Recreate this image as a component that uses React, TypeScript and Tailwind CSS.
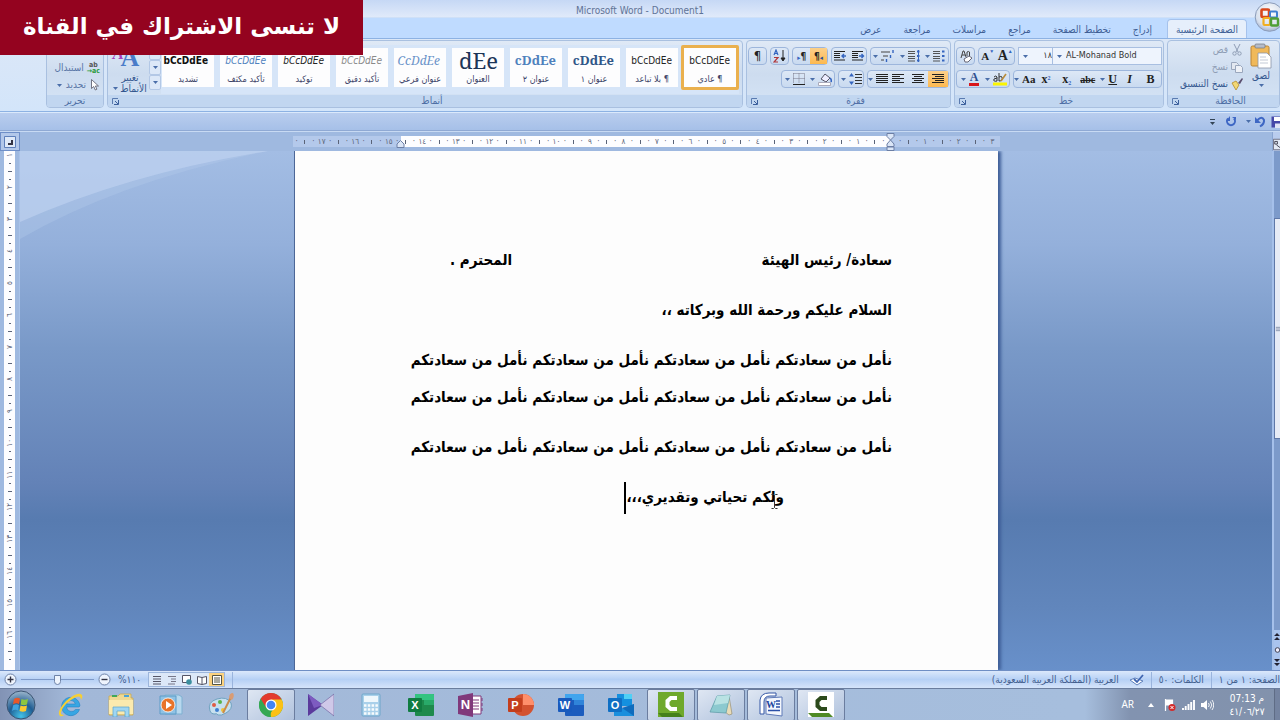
import type { ReactNode } from "react";
import clsx from "clsx";

const tabs = ["إدراج", "تخطيط الصفحة", "مراجع", "مراسلات", "مراجعة", "عرض"];

const styleCards = [
  { label: "¶ عادي", sample: "bCcDdEe", look: "text-[10px] text-[#222]" },
  { label: "¶ بلا تباعد", sample: "bCcDdEe", look: "text-[10px] text-[#222]" },
  { label: "عنوان ١", sample: "cDdEe", look: "font-['Noto_Serif','DejaVu_Serif',serif] text-[13px] font-bold text-[#2f5688]" },
  { label: "عنوان ٢", sample: "cDdEe", look: "font-['Noto_Serif','DejaVu_Serif',serif] text-[13px] font-bold text-[#4f81bd]" },
  { label: "العنوان", sample: "dEe", look: "font-['Noto_Serif','DejaVu_Serif',serif] text-[22px] leading-[25px] text-[#1c3558]" },
  { label: "عنوان فرعي", sample: "CcDdEe", look: "font-['Noto_Serif','DejaVu_Serif',serif] text-[12px] italic text-[#6b93c9]" },
  { label: "تأكيد دقيق", sample: "bCcDdEe", look: "text-[10px] italic text-[#8a8a8a]" },
  { label: "توكيد", sample: "bCcDdEe", look: "text-[10px] italic text-[#222]" },
  { label: "تأكيد مكثف", sample: "bCcDdEe", look: "text-[10px] italic text-[#4f81bd]" },
  { label: "تشديد", sample: "bCcDdEe", look: "text-[10px] font-bold text-[#111]" },
];

const rulerMarks = ["٣", "٢", "١", "", "١", "٢", "٣", "٤", "٥", "٦", "٧", "٨", "٩", "١٠", "١١", "١٢", "١٣", "١٤", "١٥", "١٦", "١٧"];
const sideMarks = ["١", "٢", "٣", "٤", "٥", "٦", "٧", "٨", "٩", "١٠", "١١", "١٢", "١٣", "١٤", "١٥", "١٦"];

const bodyLine = "نأمل من سعادتكم نأمل من سعادتكم نأمل من سعادتكم نأمل من سعادتكم";

const Caret = () => (
  <svg viewBox="0 0 5 3" className="h-[3px] w-[5px] shrink-0" aria-hidden="true">
    <path d="M0 0h5L2.500 3z" fill="#4a6ea9" />
  </svg>
);

const Launcher = () => (
  <button aria-label="خيارات" className="flex w-[14px] items-center justify-center">
    <svg viewBox="0 0 7 7" className="h-[7px] w-[7px]">
      <path d="M.5 6V.5H6" fill="none" stroke="#5a7bb0" />
      <path d="M6.500 2v4.500H2M3 3l3 3" fill="none" stroke="#3b5f9c" />
    </svg>
  </button>
);

function Group({ title, launcher, className, children }: { title: string; launcher?: boolean; className?: string; children: ReactNode }) {
  return (
    <section className={clsx("flex h-[68px] flex-col overflow-hidden rounded-sm border border-[#a9c0e0] bg-linear-to-b from-[#dfe9f6] via-[#cddcef] to-[#d5e4f6]", className)}>
      <div className="h-[54px]">{children}</div>
      <div className="flex h-3 bg-[#c1d6f0]">
        <h2 className="flex-1 text-center text-[10px] leading-3 text-[#4f6fa5]">{title}</h2>
        {launcher && <Launcher />}
      </div>
    </section>
  );
}

const Box = ({ className, children }: { className?: string; children: ReactNode }) => (
  <div className={clsx("flex h-[18px] items-stretch rounded-sm border border-[#9db6dc] bg-linear-to-b from-[#dde8f6] to-[#c9daf0]", className)}>
    {children}
  </div>
);

function Btn({ label, on, caret, children }: { label: string; on?: boolean; caret?: boolean; children: ReactNode }) {
  return (
    <button
      aria-label={label}
      title={label}
      className={clsx("flex flex-1 items-center justify-center gap-[3px] text-[#222]", on && "bg-linear-to-b from-[#fbd08a] to-[#fdb94e]")}
    >
      {children}
      {caret && <Caret />}
    </button>
  );
}

function Lines({ widths, align }: { widths: number[]; align: "right" | "left" | "center" }) {
  return (
    <svg viewBox="0 0 12 10" className="h-[10px] w-3">
      {widths.map((w, i) => (
        <rect key={i} x={align === "right" ? 12 - w : align === "left" ? 0 : (12 - w) / 2} y={i * 2} width={w} height="1" fill="#222" />
      ))}
    </svg>
  );
}

const ListIcon = ({ mark }: { mark: string }) => (
  <svg viewBox="0 0 12 12" className="h-3 w-3">
    <path d="M0 1.500h7M0 3.500h7M0 6.500h7M0 8.500h7M0 11h7" stroke="#444" strokeWidth=".9" />
    <path d="M9 1.500h2.500M9 6h2.500M9 10.500h2.500" stroke="#3565c0" strokeWidth="2" />
    {mark === "number" && <path d="M10.500 0v12" stroke="#3565c0" />}
  </svg>
);

const IndentIcon = ({ flip }: { flip?: boolean }) => (
  <svg viewBox="0 0 14 12" className="h-3 w-[14px]">
    <path d="M1 1.500h11M1 3.500h6M1 5.500h6M1 7.500h6M1 10h11" stroke="#222" strokeWidth="1.200" />
    <path d={flip ? "M9 6h4M11 4L9 6l2 2" : "M8 6h4M10.500 4l2 2-2 2"} stroke="#3565c0" strokeWidth="1.400" fill="none" />
  </svg>
);

function FontGroup() {
  return (
    <Group title="خط" launcher className="w-[210px] shrink-0">
      <div className="flex flex-col gap-[5px] px-px pt-[6px]">
        <div className="flex gap-[3px]">
          <div className="flex">
            <label className="flex h-[18px] w-[110px] items-center border border-[#a8bfe1] bg-[#eef4fd] pe-1">
              <select aria-label="نوع الخط" dir="ltr" className="w-full appearance-none bg-transparent ps-1 text-[9px] text-[#333] outline-none">
                <option>AL-Mohanad Bold</option>
              </select>
              <Caret />
            </label>
            <label className="flex h-[18px] w-[34px] items-center border border-r-0 border-[#a8bfe1] bg-[#eef4fd] pe-1">
              <select aria-label="حجم الخط" className="w-full appearance-none bg-transparent text-[9px] text-[#333] outline-none">
                <option>١٨</option>
              </select>
              <Caret />
            </label>
          </div>
          <Box className="w-[37px] font-['Liberation_Serif',serif] font-bold">
            <Btn label="تكبير الخط"><span dir="ltr" className="flex"><span className="text-[14px] leading-4">A</span><span className="text-[5px] text-[#3565c0]">▲</span></span></Btn>
            <Btn label="تصغير الخط"><span dir="ltr" className="flex"><span className="text-[11px] leading-4">A</span><span className="text-[5px] text-[#3565c0]">▼</span></span></Btn>
          </Box>
          <Box className="w-[19px]">
            <Btn label="مسح التنسيق">
              <svg viewBox="0 0 14 14" className="h-[14px] w-[14px]">
                <path d="M2 9L4 2h1l2 6M3 6h3M8 7V3q2-1 2.500 0v4" fill="none" stroke="#444" />
                <path d="M5 10l5-3 3 2-4 4H6z" fill="#fff" stroke="#667" />
              </svg>
            </Btn>
          </Box>
        </div>
        <div className="flex gap-[3px]">
          <Box className="w-[149px] font-['Liberation_Serif',serif] text-[12px] font-bold">
            <Btn label="غامق">B</Btn>
            <Btn label="مائل"><i>I</i></Btn>
            <Btn label="تسطير" caret><u>U</u></Btn>
            <Btn label="يتوسطه خط"><s className="text-[10px]">abc</s></Btn>
            <Btn label="منخفض"><span dir="ltr">x<sub className="text-[6px] text-[#3565c0]">2</sub></span></Btn>
            <Btn label="مرتفع"><span dir="ltr">x<sup className="text-[6px] text-[#3565c0]">2</sup></span></Btn>
            <Btn label="تغيير حالة الأحرف" caret><span className="text-[11px]">Aa</span></Btn>
          </Box>
          <Box className="w-[54px] font-['Liberation_Serif',serif] font-bold">
            <Btn label="لون التمييز" caret>
              <svg viewBox="0 0 14 14" className="h-[14px] w-[14px]">
                <path d="M0 10.500h14v3H0z" fill="#fbf500" />
                <path d="M1 5q2-2 3 0v4q-4 1-3-2l3-1M6 1v8q4 0 3-4-1-1-3 0" fill="none" stroke="#333" />
                <path d="M8 9l5-7" stroke="#b98c3a" strokeWidth="1.600" />
              </svg>
            </Btn>
            <Btn label="لون الخط" caret>
              <span className="border-b-[3px] border-[#d8151b] px-px text-[12px] leading-[11px] text-[#2e4f8f]">A</span>
            </Btn>
          </Box>
        </div>
      </div>
    </Group>
  );
}

function ParagraphGroup() {
  return (
    <Group title="فقرة" launcher className="w-[205px] shrink-0">
      <div className="flex flex-col gap-[5px] px-px pt-[6px]">
        <div className="flex gap-[3px]">
          <Box className="w-[80px]">
            <Btn label="تعداد نقطي" caret><ListIcon mark="bullet" /></Btn>
            <Btn label="تعداد رقمي" caret><ListIcon mark="number" /></Btn>
            <Btn label="قائمة متعددة المستويات" caret>
              <svg viewBox="0 0 14 12" className="h-3 w-[14px]">
                <path d="M0 2h9M2 6h5M0 10h3" stroke="#444" strokeWidth="1.200" />
                <path d="M12 0v3M9.500 5v3M5.500 9v3" stroke="#3565c0" strokeWidth="1.400" />
              </svg>
            </Btn>
          </Box>
          <Box className="w-[37px]">
            <Btn label="إنقاص المسافة البادئة"><IndentIcon /></Btn>
            <Btn label="زيادة المسافة البادئة"><IndentIcon flip /></Btn>
          </Box>
          <Box className="w-9">
            <Btn label="من اليمين إلى اليسار" on><span dir="ltr" className="text-[10px] font-bold">¶<span className="text-[7px] text-[#2c4f95]">◂</span></span></Btn>
            <Btn label="من اليسار إلى اليمين"><span dir="ltr" className="text-[10px] font-bold"><span className="text-[7px] text-[#3565c0]">▸</span>¶</span></Btn>
          </Box>
          <Box className="w-5">
            <Btn label="فرز">
              <svg viewBox="0 0 13 14" className="h-[14px] w-[13px]">
                <path d="M1 6l2-5 2 5M2 4.500h2" fill="none" stroke="#3565c0" strokeWidth="1.200" />
                <path d="M1 8.500h4l-4 4.500h4" fill="none" stroke="#b0363a" strokeWidth="1.200" />
                <path d="M10 1v10M8 9l2 3 2-3z" fill="#222" stroke="#222" />
              </svg>
            </Btn>
          </Box>
          <Box className="w-[19px]">
            <Btn label="إظهار الكل"><span className="text-[13px] leading-4">¶</span></Btn>
          </Box>
        </div>
        <div className="flex gap-[3px]">
          <Box className="w-[82px]">
            <Btn label="محاذاة إلى اليمين" on><Lines align="right" widths={[12, 9, 12, 9, 12]} /></Btn>
            <Btn label="توسيط"><Lines align="center" widths={[12, 8, 12, 8, 12]} /></Btn>
            <Btn label="محاذاة إلى اليسار"><Lines align="left" widths={[12, 8, 12, 8, 12]} /></Btn>
            <Btn label="ضبط" caret><Lines align="left" widths={[12, 12, 12, 12, 12]} /></Btn>
          </Box>
          <Box className="w-[26px]">
            <Btn label="تباعد الأسطر" caret>
              <svg viewBox="0 0 13 12" className="h-3 w-[13px]">
                <path d="M6 1.500h7M6 4.500h7M6 7.500h7M6 10.500h7" stroke="#333" strokeWidth="1.100" />
                <path d="M2.500 0L5 3.500H0zM2.500 12L5 8.500H0z" fill="#3565c0" />
              </svg>
            </Btn>
          </Box>
          <Box className="w-[54px]">
            <Btn label="تظليل" caret>
              <svg viewBox="0 0 14 14" className="h-[14px] w-[14px]">
                <path d="M3 7l4-5 5 4-4 4z" fill="#eef" stroke="#556" />
                <path d="M12 6q2 2 1 4" stroke="#3565c0" strokeWidth="1.600" fill="none" />
                <path d="M.5 10.500h12v3H.5z" fill="#fff" stroke="#aab" />
              </svg>
            </Btn>
            <Btn label="حدود" caret>
              <svg viewBox="0 0 12 12" className="h-3 w-3">
                <path d="M.5.500h11v10M.5.500v10M6 .5v10M.5 5.500h11" fill="none" stroke="#778" strokeDasharray="1 1" />
                <path d="M0 11.500h12" stroke="#222" />
              </svg>
            </Btn>
          </Box>
        </div>
      </div>
    </Group>
  );
}

function ClipboardGroup() {
  return (
    <Group title="الحافظة" launcher className="w-[113px] shrink-0">
      <div className="flex h-full text-[10px] text-[#34578f]">
        <button className="flex w-9 flex-col items-center pt-[2px]">
          <svg viewBox="0 0 22 26" className="h-[26px] w-[22px]">
            <rect x="1" y="3" width="18" height="20" rx="1.500" fill="#f0b95a" stroke="#b98436" />
            <rect x="5" y="1" width="10" height="4" rx="1" fill="#b6bcc8" stroke="#6f7682" strokeWidth=".7" />
            <path d="M8 10h9l4 4v11H8z" fill="#fff" stroke="#8c95a8" strokeWidth=".8" />
            <path d="M10 14h6M10 17h8M10 20h8" stroke="#b4bccb" strokeWidth=".8" />
          </svg>
          <span className="mb-px leading-[14px]">لصق</span>
          <Caret />
        </button>
        <div className="flex flex-1 flex-col items-start gap-[3px] pt-[2px]">
          <button className="flex items-center gap-[3px] leading-[14px] text-[#8f9db5]">
            <svg viewBox="0 0 12 12" className="h-3 w-3">
              <path d="M3 0l4 8M9 0L5 8" stroke="#8f9db5" />
              <circle cx="3.500" cy="9.500" r="1.700" fill="none" stroke="#8f9db5" />
              <circle cx="8.500" cy="9.500" r="1.700" fill="none" stroke="#8f9db5" />
            </svg>
            قص
          </button>
          <button className="flex items-center gap-[3px] leading-[14px] text-[#8f9db5]">
            <svg viewBox="0 0 12 12" className="h-3 w-3">
              <path d="M.5 1.500h5l2 2v5h-7z" fill="#e3e8f0" stroke="#9aa7bd" />
              <path d="M4.500 4.500h5l2 2v5h-7z" fill="#eef1f7" stroke="#9aa7bd" />
            </svg>
            نسخ
          </button>
          <button className="flex items-center gap-[3px] whitespace-nowrap leading-[14px]">
            <svg viewBox="0 0 12 12" className="h-3 w-3">
              <path d="M1 5l4-2 3 4-3 5z" fill="#f2d774" stroke="#b48c2b" strokeWidth=".8" />
              <path d="M7 5l4-5 1 1-3 5z" fill="#5a4e6e" />
            </svg>
            نسخ التنسيق
          </button>
        </div>
      </div>
    </Group>
  );
}

function StylesGroup() {
  return (
    <Group title="أنماط" launcher className="min-w-0 flex-1">
      <div className="flex px-[3px] pt-1">
        <div className="flex min-w-0 flex-1 overflow-hidden bg-[#d6e5f8]">
          {styleCards.map((card, i) => (
            <button
              key={card.label}
              className={clsx("flex h-[45px] w-[58px] shrink-0 border-[3px]", i === 0 ? "rounded-xs border-[#eab04e] bg-[#fff]" : "border-transparent")}
            >
              <span className="flex h-[39px] w-[52px] flex-col bg-[#fdfdfe]">
                <span dir="ltr" className={clsx("flex h-[25px] items-center justify-end pr-[6px]", card.look)}>{card.sample}</span>
                <span className="whitespace-nowrap text-center text-[9px] leading-3 text-[#3c4468]">{card.label}</span>
              </span>
            </button>
          ))}
        </div>
        <div className="flex w-3 flex-col">
          {["السابق", "التالي", "المزيد"].map((name) => (
            <button key={name} aria-label={name} className="flex h-[15px] items-center justify-center rounded-xs border border-[#b3c8e6] bg-[#dce8f8]">
              <Caret />
            </button>
          ))}
        </div>
        <button className="flex w-[38px] flex-col items-center pt-[3px] text-[10px] leading-[11px] text-[#34578f]">
          <span className="relative font-['Liberation_Serif',serif] text-[26px] leading-5 font-bold text-[#4a7cc9]">
            A<span className="absolute -left-2 -top-1 text-[17px] italic text-[#a63fc0]">A</span>
          </span>
          <span className="mt-1">تغيير</span>
          <span className="flex items-center gap-[2px]">الأنماط<Caret /></span>
        </button>
      </div>
    </Group>
  );
}

function EditingGroup() {
  return (
    <Group title="تحرير" className="w-[58px] shrink-0">
      <div className="flex h-full flex-col items-start justify-end gap-[3px] px-[3px] pb-[3px] text-[10px] text-[#5a76a6]">
        <button className="flex items-center gap-[3px] leading-[14px]">
          <span dir="ltr" className="flex flex-col text-[7px] leading-[6px] font-bold">
            <span className="text-[#555]">ab</span>
            <span className="text-[#2a9a3c]">→ac</span>
          </span>
          استبدال
        </button>
        <button className="flex items-center gap-1 leading-[14px]">
          <svg viewBox="0 0 10 12" className="h-3 w-[10px]">
            <path d="M1.500.500v9l2.200-2 1.600 3.500 1.600-.8L5.400 7H8.500z" fill="#fff" stroke="#556" strokeWidth=".8" />
          </svg>
          تحديد
          <Caret />
        </button>
      </div>
    </Group>
  );
}

function OfficeButton() {
  return (
    <button aria-label="زر Office" className="absolute -right-[2px] top-[2px] h-[30px] w-[28px] overflow-hidden">
      <svg viewBox="0 0 28 30" className="h-full w-full">
        <defs>
          <radialGradient id="orb" cx=".5" cy=".35" r=".7">
            <stop offset="0" stopColor="#fff" />
            <stop offset=".7" stopColor="#d7dfec" />
            <stop offset="1" stopColor="#93a4c2" />
          </radialGradient>
        </defs>
        <circle cx="15.500" cy="15" r="14.300" fill="url(#orb)" stroke="#8b9cba" />
        <rect x="7.500" y="7.500" width="7.500" height="7.500" rx="1" fill="none" stroke="#d9481c" strokeWidth="2.600" />
        <rect x="16" y="9.500" width="7" height="6" rx="1" fill="none" stroke="#3f7fd0" strokeWidth="2" />
        <rect x="9.500" y="16" width="6.500" height="7" rx="1" fill="none" stroke="#f2ae20" strokeWidth="2.200" />
        <rect x="17" y="16.500" width="7" height="7" rx="1" fill="none" stroke="#4f9f36" strokeWidth="2.400" />
      </svg>
    </button>
  );
}

function QuickAccess() {
  return (
    <div className="flex h-[19px] items-center gap-[5px] border-y border-[#8fa9d4] border-t-[#dbe9fb] bg-linear-to-b from-[#b9cdee] to-[#a6c0e8]">
      <button aria-label="حفظ" className="-mr-1">
        <svg viewBox="0 0 13 12" className="h-3 w-[13px]">
          <path d="M.5.500h12v11H.5z" fill="#4648a8" />
          <path d="M3 1h7v4H3z" fill="#fff" />
          <path d="M4 7.500h5V12H4z" fill="#dfe3f5" />
        </svg>
      </button>
      <button aria-label="تراجع" className="flex items-center gap-[3px]">
        <svg viewBox="0 0 12 12" className="h-3 w-3">
          <path d="M3.500 4Q8-.5 10 4q.5 4-4 6.500" fill="none" stroke="#3e67c4" strokeWidth="2" />
          <path d="M1 1v6h6z" fill="#3e67c4" />
        </svg>
        <Caret />
      </button>
      <button aria-label="تكرار" className="mr-1">
        <svg viewBox="0 0 12 12" className="h-3 w-3">
          <path d="M3 2.500a4 4 0 1 0 6 0" fill="none" stroke="#3e67c4" strokeWidth="2" />
          <path d="M5 0v5H1zM7 1h4v3z" fill="#3e67c4" />
        </svg>
      </button>
      <button aria-label="تخصيص" className="flex w-4 justify-center">
        <svg viewBox="0 0 5 6" className="h-[6px] w-[5px]"><path d="M0 .5h5" stroke="#345" /><path d="M0 3h5L2.500 6z" fill="#345" /></svg>
      </button>
    </div>
  );
}

function RulerRow() {
  return (
    <div dir="ltr" className="flex h-5 border-t border-[#c8daf3] bg-[#9fb9e0]">
      <button aria-label="علامة الجدولة" className="flex w-5 items-center justify-center border border-[#6f8fc8] bg-[#b3c8ea]">
        <svg viewBox="0 0 12 12" className="h-3 w-3">
          <path d="M.5.500h11v11H.5z" fill="#dfe9f8" stroke="#5f80bb" />
          <path d="M8 4v4H4" fill="none" stroke="#334" strokeWidth="2" />
        </svg>
      </button>
      <div className="flex flex-1 justify-center pt-1">
        <div dir="rtl" className="relative flex h-[11px] w-[707px] bg-[linear-gradient(to_left,#b4c9eb_109px,#fdfdff_109px,#fdfdff_599px,#b4c9eb_599px)] pr-[3px] text-[8px] leading-[11px] text-[#5b6478]">
          {rulerMarks.map((m, i) => (
            <div key={i} className="grid flex-1 grid-cols-4">
              <span className="flex justify-center">{m}</span>
              <span className="flex justify-center">·</span>
              <span className="flex items-center justify-center"><i className="h-1 w-px bg-[#5b6478]" /></span>
              <span className="flex justify-center">·</span>
            </div>
          ))}
          <svg viewBox="0 0 9 18" className="absolute -top-[3px] right-[105px] h-[18px] w-[9px]">
            <path d="M1 .5h7v3L4.500 7 1 3.500zM1 13.500V11l3.500-4L8 11v2.500zM1 14h7v3.500H1z" fill="#dbe6f7" stroke="#6c7fa5" />
          </svg>
          <svg viewBox="0 0 9 8" className="absolute right-[595px] top-1 h-2 w-[9px]">
            <path d="M1 7.500V4l3.500-3.500L8 4v3.500z" fill="#dbe6f7" stroke="#6c7fa5" />
          </svg>
        </div>
      </div>
      <div className="flex w-2 items-end overflow-hidden border-l border-[#8aa5d2] bg-[#b9ccee]">
        <svg viewBox="0 0 8 13" className="h-[13px] w-2"><path d="M.5.500h12v12H.5z" fill="#e4eaf5" stroke="#667" /><path d="M2 3h3v3H2zM4 7l4 3" fill="none" stroke="#334" /></svg>
      </div>
    </div>
  );
}

function DocumentArea() {
  return (
    <div dir="ltr" className="flex min-h-0 flex-1 bg-[linear-gradient(#a3bde4,#94b0db_18%,#7999c8_38%,#6382b7_64%,#577bb0_71%,#6186bc_88%,#6890ca)]">
      <div className="w-5 overflow-hidden border-r border-[#a9c2e8] bg-[#9fb9e0] pl-1">
        <div className="flex w-[11px] flex-col items-center bg-[#fdfdff] text-[8px] leading-[11px] text-[#5b6478]">
          {sideMarks.map((m) => (
            <div key={m} className="grid h-8 w-full shrink-0 grid-rows-4 items-center justify-items-center">
              <span className="flex rotate-180 items-center justify-center [writing-mode:vertical-rl]">{m}</span>
              <i className="h-px w-[2px] bg-[#5b6478]" />
              <i className="h-px w-1 bg-[#5b6478]" />
              <i className="h-px w-[2px] bg-[#5b6478]" />
            </div>
          ))}
          <span className="h-8" />
        </div>
      </div>
      <div className="relative flex min-w-0 flex-1 justify-center overflow-hidden">
        <svg viewBox="0 0 250 95" className="absolute left-0 top-0 h-[95px] w-[250px]" aria-hidden="true">
          <path d="M0 0h248Q100 30 0 88z" fill="#b4caec" opacity=".35" />
          <path d="M0 0h248Q110 22 0 71z" fill="#c2d4f1" opacity=".6" />
        </svg>
        <article
          dir="rtl"
          lang="ar"
          className="relative w-[704px] shrink-0 border-l border-[#4d6797] bg-[#fdfdfd] px-[106px] pt-[91px] text-[15px] leading-[37px] font-bold text-black shadow-[3px_0_3px_#3f5f98]"
        >
          <p className="mb-[13px] flex justify-between pl-[49px]">
            <span>سعادة/ رئيس الهيئة</span>
            <span>المحترم .</span>
          </p>
          <p className="mb-[13px]">السلام عليكم ورحمة الله وبركاته ،،</p>
          <p className="whitespace-nowrap">{bodyLine}</p>
          <p className="mb-[13px] whitespace-nowrap">{bodyLine}</p>
          <p className="mb-[13px] whitespace-nowrap">{bodyLine}</p>
          <p className="flex items-center pr-[108px]">
            <span>ولكم تحياتي وتقديري،،،</span>
            <span className="h-8 w-[2px] bg-black" />
          </p>
          <svg viewBox="0 0 7 15" className="absolute right-[220px] top-[343px] h-[15px] w-[7px]" aria-hidden="true">
            <path d="M.5.500h2l1 1 1-1h2M3.500 1.500v12M.5 14.500h2l1-1 1 1h2" fill="none" stroke="#333" />
          </svg>
        </article>
      </div>
      <div className="flex w-2 flex-col border-l-2 border-[#a5c0ea] bg-[#7c9aca]">
        <div className="h-[67px]" />
        <div className="flex h-[221px] items-center border border-r-0 border-[#5f78a8] bg-[#e6ebf6]">
          <svg viewBox="0 0 6 6" className="h-[6px] w-[6px]"><path d="M1 1h5M1 3h5M1 5h5" stroke="#7d8aa5" /></svg>
        </div>
        <div className="flex-1" />
        <div className="flex h-10 flex-col items-center justify-around bg-[#a9c3ee] text-[#223]">
          <svg viewBox="0 0 6 8" className="h-2 w-[6px]"><path d="M0 3l3-3 3 3zM0 7l3-3 3 3z" fill="#223" /></svg>
          <svg viewBox="0 0 6 6" className="h-[6px] w-[6px]"><circle cx="3.500" cy="3" r="2.300" fill="#eef" stroke="#445" /></svg>
          <svg viewBox="0 0 6 8" className="h-2 w-[6px]"><path d="M0 0h6L3 3zM0 4h6L3 7z" fill="#223" /></svg>
        </div>
      </div>
    </div>
  );
}

const Sep = () => <span className="h-4 w-px bg-[#9ab4dd]" />;

function ViewButton({ name, on, children }: { name: string; on?: boolean; children: ReactNode }) {
  return (
    <button aria-label={name} className={clsx("flex h-[13px] w-[15px] items-center justify-center", on && "bg-[#fbd27f]")}>
      <svg viewBox="0 0 10 10" className="h-[10px] w-[10px]">{children}</svg>
    </button>
  );
}

function StatusBar() {
  return (
    <footer className="flex h-[18px] items-center gap-[7px] border-t border-[#6f8ec4] bg-linear-to-b from-[#dbe8fb] via-[#b6d0f5] to-[#d5e4fa] text-[10px] text-[#44608f]">
      <span>الصفحة: ١ من ١</span>
      <Sep />
      <span>الكلمات: ٥٠</span>
      <Sep />
      <svg viewBox="0 0 14 12" className="h-3 w-[14px]">
        <path d="M0 6l5-2 8 3-6 4z" fill="#fff" stroke="#5f80bb" />
        <path d="M4 5l3 3 6-7" fill="none" stroke="#3f65b0" strokeWidth="1.800" />
      </svg>
      <span className="mr-1">العربية (المملكة العربية السعودية)</span>
      <span className="mr-2"><Sep /></span>
      <div className="flex-1" />
      <Sep />
      <div className="flex border border-[#9db6dc] bg-[#dce8f8]">
        <ViewButton name="تخطيط الطباعة" on><path d="M.5.500h9v9H.5zM2 3h6M2 5h6M2 7h6" fill="#fff" stroke="#554" /></ViewButton>
        <ViewButton name="قراءة"><path d="M.5 1.500L5 2.500l4.500-1v7L5 9.500l-4.500-1zM5 2.500v7" fill="#fff" stroke="#556" /></ViewButton>
        <ViewButton name="تخطيط ويب"><path d="M.5.500h8v7h-8z" fill="#fff" stroke="#556" /><circle cx="7" cy="7" r="2.800" fill="#3c8f9f" /></ViewButton>
        <ViewButton name="مخطط تفصيلي"><path d="M1 1.500h8M4 4h5M4 6.500h5M1 9h7" stroke="#778" /></ViewButton>
        <ViewButton name="مسودة"><path d="M1 1.500h8M1 4h8M1 6.500h8M1 9h8" stroke="#556" /></ViewButton>
      </div>
      <span dir="ltr">%١١٠</span>
      <div dir="ltr" className="flex items-center gap-1 pl-1">
        <button aria-label="تكبير">
          <svg viewBox="0 0 13 13" className="h-[13px] w-[13px]"><circle cx="6.500" cy="6.500" r="5.500" fill="#eef4fd" stroke="#6f83a8" /><path d="M3.500 6.500h6M6.500 3.500v6" stroke="#334" strokeWidth="1.400" /></svg>
        </button>
        <input
          type="range"
          aria-label="مستوى التكبير"
          defaultValue={50}
          className="h-3 w-[73px] appearance-none bg-[linear-gradient(#7f9ac8,#7f9ac8)] bg-[length:100%_1px] bg-center bg-no-repeat [&::-webkit-slider-thumb]:h-[10px] [&::-webkit-slider-thumb]:w-[7px] [&::-webkit-slider-thumb]:appearance-none [&::-webkit-slider-thumb]:rounded-b-md [&::-webkit-slider-thumb]:border [&::-webkit-slider-thumb]:border-[#6f83a8] [&::-webkit-slider-thumb]:bg-[#eef4fd]"
        />
        <button aria-label="تصغير">
          <svg viewBox="0 0 13 13" className="h-[13px] w-[13px]"><circle cx="6.500" cy="6.500" r="5.500" fill="#eef4fd" stroke="#6f83a8" /><path d="M3.500 6.500h6" stroke="#334" strokeWidth="1.400" /></svg>
        </button>
      </div>
    </footer>
  );
}

function OfficeTile({ letter, back, light, front, round }: { letter: string; back: string; light: string; front: string; round?: boolean }) {
  return (
    <span className="relative flex h-6 w-[26px] items-center">
      <svg viewBox="0 0 26 24" className="absolute inset-0 h-full w-full">
        {round ? (
          <>
            <circle cx="15" cy="12" r="11" fill={back} />
            <path d="M15 1a11 11 0 0 1 11 11H15z" fill={light} />
          </>
        ) : (
          <>
            <rect x="7" y="1" width="19" height="22" rx="1" fill={back} />
            <path d="M7 1h18a1 1 0 0 1 1 1v5H7z" fill={light} />
            <path d="M16 7h10v5H16z" fill={light} opacity=".55" />
          </>
        )}
        <rect x="0" y="5" width="14" height="14" rx="1" fill={front} />
      </svg>
      <span className="relative w-[14px] text-center font-['Liberation_Sans',sans-serif] text-[11px] leading-[14px] font-bold text-white">{letter}</span>
    </span>
  );
}

const CamtasiaC = ({ color, bg, base }: { color: string; bg: string; base: string }) => (
  <svg viewBox="0 0 26 25" className="h-[25px] w-[26px]">
    <path d="M0 0h26v25H0z" fill={bg} />
    <path d="M0 21h21l4 4H4z" fill={base} />
    <path d="M19 4h-7L7.500 8v7l4.500 4h7v-4h-5.500L11.500 13v-3l2-2H19z" fill={color} />
  </svg>
);

function TaskButton({ name, open, children }: { name: string; open?: boolean; children: ReactNode }) {
  return (
    <button
      aria-label={name}
      className={clsx("flex h-8 w-12 shrink-0 items-center justify-center rounded-xs", open && "border border-[#6b7d9f] bg-linear-to-br from-[#dfe7f3] to-[#b0c2dd]")}
    >
      {children}
    </button>
  );
}

function Taskbar() {
  return (
    <nav dir="ltr" className="flex h-8 items-center border-t border-[#6a7d9e] bg-[linear-gradient(to_right,#8293b5,#a2b8d8_70px,#a6bedd_calc(100%-210px),#a6bedd_calc(100%-195px),#8293b0_calc(100%-150px),#8292ac)]">
      <button aria-label="ابدأ" className="flex w-[47px] shrink-0 pl-[6px]">
        <svg viewBox="0 0 30 30" className="h-[30px] w-[30px]">
          <defs>
            <radialGradient id="start" cx=".5" cy=".9" r=".9">
              <stop offset="0" stopColor="#43c2e8" />
              <stop offset=".5" stopColor="#1f5d93" />
              <stop offset="1" stopColor="#9fb8cd" />
            </radialGradient>
          </defs>
          <circle cx="15" cy="15" r="14" fill="url(#start)" stroke="#3b5472" />
          <path d="M8 9q3-2 6-.5l-1 5.500q-3-1.500-6 .5z" fill="#e8582a" />
          <path d="M15.500 9q3 1.500 6.500 0l-1 5.500q-3 1.500-6.500 0z" fill="#8dc63f" />
          <path d="M7 15.500q3-2 6-.5l-1 5.500q-3-1.500-6 .5z" fill="#3fa3e0" />
          <path d="M14.500 15.500q3 1.500 6.500 0l-1 5.500q-3 1.500-6.500 0z" fill="#fcc82f" />
        </svg>
      </button>
      <div className="flex gap-[2px]">
        <TaskButton name="Internet Explorer">
          <svg viewBox="0 0 28 26" className="h-[26px] w-7">
            <path d="M22 15H9.500a5 5 0 0 0 9 2.500h4A9.200 9.200 0 1 1 23 14zM9.500 12h8.800a4.500 4.500 0 0 0-8.800 0z" fill="#37a6e3" stroke="#1c79bd" strokeWidth=".5" fillRule="evenodd" />
            <path d="M3 24Q-1 20 9 9 21-1 25 3q1 2-1 5 0-5-5-3Q7 11 4 20q-1 3 3 3-2 2-4 1z" fill="#f6cf35" />
          </svg>
        </TaskButton>
        <TaskButton name="مستكشف Windows">
          <svg viewBox="0 0 28 24" className="h-6 w-7">
            <path d="M2 3h9l2-2h11v4h2v17H2z" fill="#eed993" stroke="#c9a94e" strokeWidth=".8" />
            <path d="M5 2h5v2H5z" fill="#3fa85a" /><path d="M17 2h5v2h-5z" fill="#4aa3d8" />
            <path d="M2 7h24v14H2z" fill="#fbeaae" />
            <path d="M6 24V14h16v10h-4v-6h-8v6z" fill="#9fd6f2" stroke="#5aa5cf" strokeWidth=".7" />
          </svg>
        </TaskButton>
        <TaskButton name="Windows Media Player">
          <svg viewBox="0 0 24 22" className="h-[22px] w-6">
            <path d="M6 1h14l3 2v17H6z" fill="#b7d8ee" stroke="#7fb1d2" />
            <path d="M1 2h16v18H1z" fill="#8fc2e4" stroke="#5d9cc8" />
            <circle cx="9" cy="11" r="7" fill="#e8742a" stroke="#fff" strokeWidth=".8" />
            <path d="M7 7l6 4-6 4z" fill="#fff" />
          </svg>
        </TaskButton>
        <TaskButton name="الرسام">
          <svg viewBox="0 0 28 26" className="h-[26px] w-7">
            <path d="M3 19Q0 10 10 7t14 4q2 6-5 10-5 3-8 2-1-2-4-1-3 0-4-3z" fill="#c7e0ef" stroke="#6fa2c0" />
            <circle cx="7" cy="13" r="2" fill="#e05c45" /><circle cx="13" cy="10" r="2" fill="#59b34c" /><circle cx="10" cy="18" r="2" fill="#3e7fd0" /><circle cx="16" cy="18" r="2" fill="#f0c13a" />
            <path d="M16 21L24 5" stroke="#c98b4b" strokeWidth="2" /><path d="M22 6q0-5 4-5 2 3-1 7z" fill="#d99c74" />
          </svg>
        </TaskButton>
        <TaskButton name="Google Chrome" open>
          <svg viewBox="0 0 24 24" className="h-6 w-6">
            <circle cx="12" cy="12" r="12" fill="#34a853" />
            <path d="M1.600 6A12 12 0 0 1 22.400 6L12 12z" fill="#e33b2e" />
            <path d="M22.400 6A12 12 0 0 1 12 24l-1-3 6-9-5-5.500h10.600z" fill="#fbc116" />
            <path d="M1.600 6L7.500 15 12 12V6.500z" fill="#e33b2e" />
            <path d="M1.600 6L7 15l5 2.500L11.500 24A12 12 0 0 1 1.600 6z" fill="#34a853" />
            <circle cx="12" cy="12" r="5.500" fill="#fff" /><circle cx="12" cy="12" r="4.300" fill="#4285f4" />
          </svg>
        </TaskButton>
        <TaskButton name="KMPlayer">
          <svg viewBox="0 0 26 24" className="h-6 w-[26px]">
            <path d="M0 1l15 11L0 23z" fill="#5b3a9c" /><path d="M0 1l15 11-9 3z" fill="#7d5bc0" />
            <path d="M26 1L12 12l14 11z" fill="#cfc8e8" stroke="#6a5a98" strokeWidth=".6" />
          </svg>
        </TaskButton>
        <TaskButton name="الحاسبة">
          <svg viewBox="0 0 20 24" className="h-6 w-5">
            <rect x="1" y="1" width="18" height="22" rx="1" fill="#a9d0ea" stroke="#6fa6ca" />
            <path d="M3 3h14v6H3z" fill="#eef7fc" />
            <path d="M3 12.500h14M3 16.500h14M3 20.500h14" stroke="#f7fbfd" strokeWidth="2.500" strokeDasharray="2.500 1.300" />
          </svg>
        </TaskButton>
        <TaskButton name="Excel"><OfficeTile letter="X" back="#1e8a4c" light="#33c481" front="#107c41" /></TaskButton>
        <TaskButton name="OneNote">
          <span className="relative flex h-6 w-[26px] items-center">
            <svg viewBox="0 0 26 24" className="absolute inset-0 h-full w-full">
              <path d="M13 3h10v18H13z" fill="#fff" stroke="#80397b" />
              <path d="M15 7h6M15 10h6M15 13h6M15 16h6M24 5v3M24 10v3M24 15v3" stroke="#80397b" />
              <path d="M0 3l15-3v24L0 21z" fill="#80397b" />
            </svg>
            <span className="relative w-[15px] text-center font-['Liberation_Sans',sans-serif] text-[13px] font-bold text-white">N</span>
          </span>
        </TaskButton>
        <TaskButton name="PowerPoint"><OfficeTile letter="P" back="#d35230" light="#ff8f6b" front="#c43e1c" round /></TaskButton>
        <TaskButton name="Word"><OfficeTile letter="W" back="#1b5cbe" light="#41a5ee" front="#185abd" /></TaskButton>
        <TaskButton name="Outlook">
          <span className="relative flex h-6 w-[26px] items-center">
            <svg viewBox="0 0 26 24" className="absolute inset-0 h-full w-full">
              <path d="M9 1h15v12H9z" fill="#1490df" />
              <path d="M16 1h8v5h-8z" fill="#50d0f5" />
              <path d="M6 11l10 5 10-5v12H6z" fill="#1a8fdd" />
              <path d="M26 11v12L14 15z" fill="#0f6cbd" />
              <rect x="0" y="5" width="14" height="14" rx="1" fill="#0f6fc4" />
            </svg>
            <span className="relative w-[14px] text-center font-['Liberation_Sans',sans-serif] text-[11px] leading-[14px] font-bold text-white">O</span>
          </span>
        </TaskButton>
        <TaskButton name="Camtasia" open><CamtasiaC color="#fff" bg="#6fa92c" base="#45801b" /></TaskButton>
        <TaskButton name="المفكرة" open>
          <svg viewBox="0 0 26 24" className="h-6 w-[26px]">
            <path d="M21 3l3 18-3 1-4-3z" fill="#e9dcb8" stroke="#8d8468" strokeWidth=".6" />
            <path d="M9 3l13-1-4 18-16-1z" fill="#8cc9cf" stroke="#5a9aa5" strokeWidth=".7" />
            <path d="M9 3l13-1-2 8-14 2z" fill="#b9e2e3" />
          </svg>
        </TaskButton>
        <TaskButton name="Document1 - Microsoft Word" open>
          <span className="relative flex h-[25px] w-[26px] items-center justify-center">
            <svg viewBox="0 0 26 25" className="absolute inset-0 h-full w-full">
              <path d="M2 22V8q1-7 9-7h7v3h-6q-6 0-6 6v12z" fill="#fff" stroke="#3457a5" />
              <path d="M8 6l16-1v19L8 22z" fill="#f4f7fd" stroke="#5f7ab8" />
              <path d="M18 9h4M18 12h4M18 15h4M10 18.500h12" stroke="#2b50a8" strokeWidth="1.500" />
            </svg>
            <span className="relative font-['Liberation_Serif',serif] text-[10px] leading-3 font-bold text-[#23469e]">W</span>
          </span>
        </TaskButton>
        <TaskButton name="Camtasia Recorder" open><CamtasiaC color="#2c4a1c" bg="#fff" base="#4f8a25" /></TaskButton>
      </div>
      <div className="flex-1" />
      <div className="flex items-center gap-[6px] text-white">
        <span className="mr-2 font-['Noto_Sans',sans-serif] text-[10px]">AR</span>
        <button aria-label="إظهار الرموز المخفية" className="mr-1">
          <svg viewBox="0 0 6 4" className="h-1 w-[6px]"><path d="M0 4l3-4 3 4z" fill="#fff" /></svg>
        </button>
        <svg viewBox="0 0 12 12" className="h-3 w-3">
          <path d="M1.500 0v12M1.500 1h7v5h-7z" fill="#fff" stroke="#fff" strokeWidth="1.200" />
          <circle cx="8" cy="8.500" r="3.500" fill="#d32b2b" /><path d="M6.500 7l3 3M9.500 7l-3 3" stroke="#fff" />
        </svg>
        <svg viewBox="0 0 13 10" className="h-[10px] w-[13px]">
          <path d="M1 10V8M3.700 10V6M6.500 10V4M9.200 10V2M12 10V0" stroke="#fff" strokeWidth="1.900" />
        </svg>
        <svg viewBox="0 0 13 12" className="h-3 w-[13px]">
          <path d="M0 4h2.500L6 1v10L2.500 8H0z" fill="#fff" />
          <path d="M7.500 4q1.500 2 0 4M9.300 2.500q3 3.500 0 7M11 1q3.500 5 0 10" fill="none" stroke="#fff" strokeWidth=".9" />
        </svg>
        <div className="w-[54px] text-center text-[10px] leading-[13px]">
          <div dir="ltr">07:13 م</div>
          <div dir="ltr">٤١/٠٦/٢٧</div>
        </div>
      </div>
      <button aria-label="إظهار سطح المكتب" className="h-8 w-[6px] border-l border-[#5f6c85] bg-[#7483a0]" />
    </nav>
  );
}

export default function App() {
  return (
    <div dir="rtl" lang="ar" className="relative flex h-screen flex-col overflow-hidden bg-[#bfdbff] font-['DejaVu_Sans_Condensed','DejaVu_Sans',sans-serif]">
      <header className="flex h-[18px] items-center justify-center border-b border-[#cfe0f7] bg-linear-to-b from-[#c6d8f5] to-[#e0eafa] pt-[3px] text-[10px] text-[#5f7396]">
        <h1 dir="ltr">Microsoft Word - Document1</h1>
      </header>
      <nav className="flex h-5 items-stretch gap-[22px] bg-[#bfdbff] pr-[33px] text-[10px] text-[#3f5f96]">
        <a href="#home" className="-ml-[7px] mt-px flex w-20 items-center justify-center rounded-t-sm border border-b-0 border-[#a5c2ec] bg-[#e6effb] pt-px">الصفحة الرئيسية</a>
        {tabs.map((t) => (
          <a key={t} href="#tab" className="flex items-center pt-[3px]">{t}</a>
        ))}
      </nav>
      <div className="flex h-[74px] gap-[3px] border-y border-[#8db2e3] bg-linear-to-b from-[#dbe7f7] to-[#d3e5fa] pt-px pl-[46px]">
        <ClipboardGroup />
        <FontGroup />
        <ParagraphGroup />
        <StylesGroup />
        <EditingGroup />
      </div>
      <QuickAccess />
      <RulerRow />
      <DocumentArea />
      <StatusBar />
      <Taskbar />
      <OfficeButton />
      <div className="absolute left-0 top-0 flex h-[55px] w-[363px] items-center justify-center bg-[#94031f] pb-[2px] font-['DejaVu_Sans',sans-serif] text-[23px] font-bold whitespace-nowrap text-white">
        لا تنسى الاشتراك في القناة
      </div>
    </div>
  );
}
